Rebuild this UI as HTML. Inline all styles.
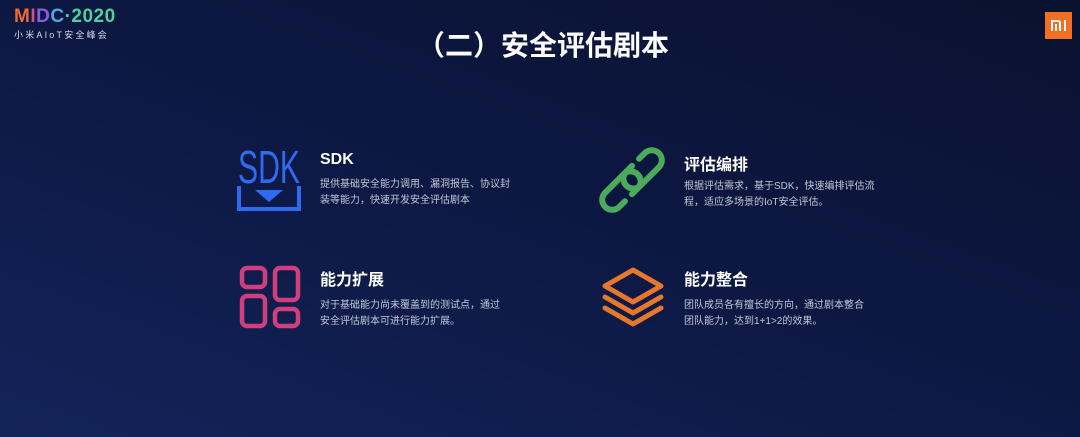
<!DOCTYPE html>
<html><head><meta charset="utf-8"><style>
*{margin:0;padding:0;box-sizing:border-box}
body{width:1080px;height:437px;overflow:hidden;font-family:"Liberation Sans","Noto Sans CJK SC",sans-serif;background:linear-gradient(200deg,#0a1230 0%,#0d1843 50%,#13245a 100%);position:relative;color:#fff}
.a{position:absolute}
.t{font-size:16px;font-weight:bold;color:#fff}
.d{font-size:10px;line-height:15.5px;color:#c3c7d4;white-space:nowrap}
</style></head><body>
<div class="a" style="left:14px;top:6px;font-size:19px;font-weight:bold;letter-spacing:0.5px;line-height:22px"><span style="color:#f06a2c">M</span><span style="color:#d04f8f">I</span><span style="color:#8a5ee0">D</span><span style="color:#4fa8e0">C</span><span style="color:#4fd0a0">·2020</span></div>
<div class="a" style="left:14px;top:28px;font-size:9px;letter-spacing:2.2px;color:#d8dbe6">小米AIoT安全峰会</div>
<div class="a" style="left:1045px;top:12px;width:27px;height:27px;background:#f36f21"></div>
<div class="a" style="left:1051px;top:20px;width:10px;height:11px;border:2px solid #fff;border-bottom:none;border-radius:0 3px 0 0"></div>
<div class="a" style="left:1055px;top:24px;width:2px;height:7px;background:#fff"></div>
<div class="a" style="left:1064px;top:20px;width:2px;height:11px;background:#fff"></div>
<div class="a" style="left:0;top:28px;width:1080px;text-align:center;font-size:28px;font-weight:bold;line-height:36px;padding-left:6px">（二）安全评估剧本</div>

<svg class="a" style="left:236px;top:146px" width="66" height="66" viewBox="0 0 66 66">
<text x="33" y="37" text-anchor="middle" font-family="Liberation Sans,sans-serif" font-size="46" fill="#2f6bf0" textLength="62" lengthAdjust="spacingAndGlyphs">SDK</text>
<path d="M3 40V63H63V40" fill="none" stroke="#2f6bf0" stroke-width="4"/>
<path d="M19 44H47L33 56Z" fill="#2f6bf0"/>
</svg>
<div class="a t" style="left:320px;top:151px">SDK</div>
<div class="a d" style="left:320px;top:177px">提供基础安全能力调用、漏洞报告、协议封<br>装等能力，快速开发安全评估剧本</div>

<svg class="a" style="left:600px;top:148px;overflow:visible" width="64" height="64" viewBox="0 0 64 64">
<g fill="none" stroke="#4caa5c" stroke-width="6" stroke-linecap="round" transform="rotate(-45 32 32)">
<path d="M30 22H4A10 10 0 0 0 4 42H12"/>
<path d="M22 42H30A10 10 0 0 0 30 22"/>
<path d="M34 42H60A10 10 0 0 0 60 22H52"/>
<path d="M42 22H34A10 10 0 0 0 34 42"/>
</g></svg>
<div class="a t" style="left:684px;top:151px">评估编排</div>
<div class="a d" style="left:684px;top:179px">根据评估需求，基于SDK，快速编排评估流<br>程，适应多场景的IoT安全评估。</div>

<svg class="a" style="left:238px;top:264px" width="64" height="66" viewBox="0 0 64 66">
<g fill="none" stroke="#cf3f7d" stroke-width="4.5">
<rect x="4" y="4" width="23" height="19" rx="5"/>
<rect x="37" y="4" width="23" height="32" rx="5"/>
<rect x="4" y="32" width="23" height="30" rx="5"/>
<rect x="37" y="45" width="23" height="17" rx="5"/>
</g></svg>
<div class="a t" style="left:320px;top:266px">能力扩展</div>
<div class="a d" style="left:320px;top:298px">对于基础能力尚未覆盖到的测试点，通过<br>安全评估剧本可进行能力扩展。</div>

<svg class="a" style="left:600px;top:266px" width="66" height="62" viewBox="0 0 66 62">
<g fill="none" stroke="#e5782d" stroke-width="5" stroke-linejoin="round" stroke-linecap="round">
<path d="M33 4L61 20L33 36L5 20Z"/>
<path d="M5 31L33 47L61 31"/>
<path d="M5 42L33 58L61 42"/>
</g></svg>
<div class="a t" style="left:684px;top:266px">能力整合</div>
<div class="a d" style="left:684px;top:298px">团队成员各有擅长的方向，通过剧本整合<br>团队能力，达到1+1&gt;2的效果。</div>
</body></html>
